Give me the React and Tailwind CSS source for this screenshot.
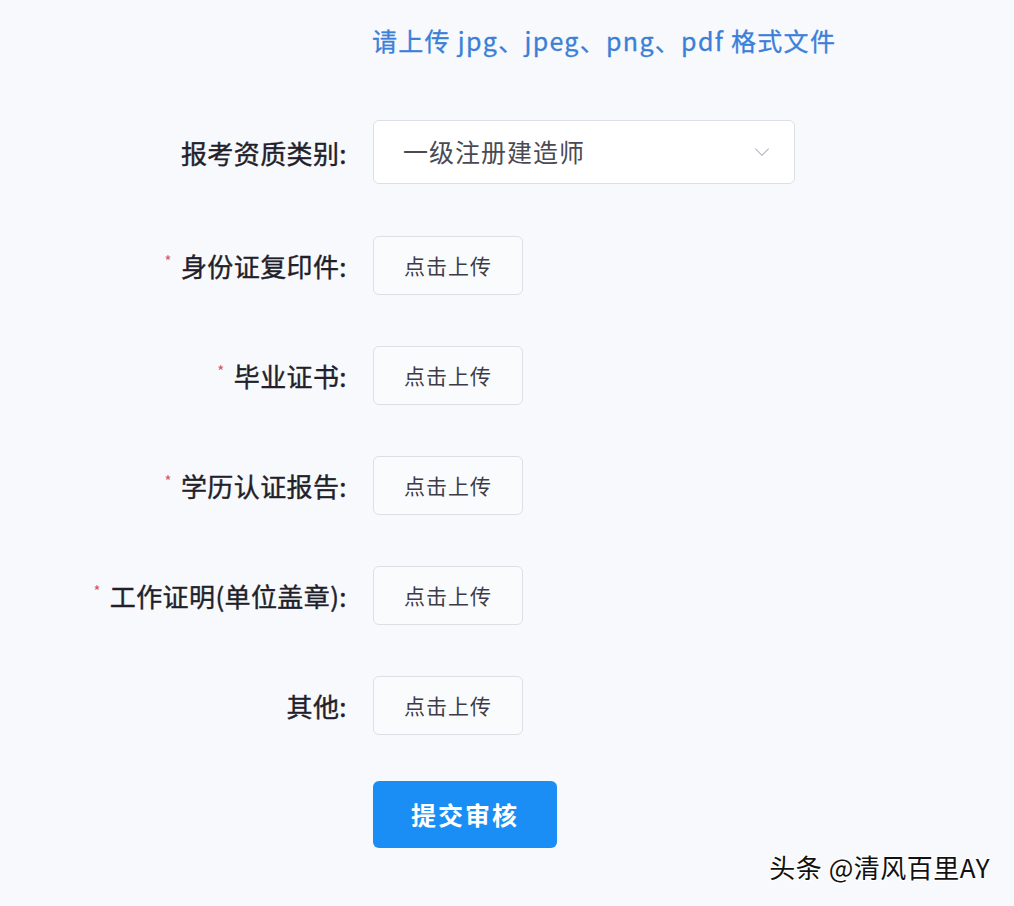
import { useState } from 'react'

const uploads = [
  { label: '身份证复印件', required: true },
  { label: '毕业证书', required: true },
  { label: '学历认证报告', required: true },
  { label: '工作证明(单位盖章)', required: true },
  { label: '其他', required: false },
]

const font = { fontFamily: '"Noto Sans CJK SC", "Noto Sans", sans-serif' }

export default function App() {
  const [category] = useState('一级注册建造师')

  return (
    <div className="relative w-[1014px] h-[906px] bg-[#f8f9fc] overflow-hidden" style={font}>
      {/* Tip */}
      <div className="pt-[22px] pl-[372px] h-[120px]">
        <p className="text-[25px] leading-[36px] text-[#3a80d8] tracking-[1.3px] [-webkit-text-stroke:0.3px_#3a80d8]">
          请上传 jpg、jpeg、png、pdf 格式文件
        </p>
      </div>

      {/* Category select */}
      <div className="flex items-center h-[64px]">
        <div className="w-[347px] text-right text-[26px] text-[#221f2b] tracking-[0.4px] [-webkit-text-stroke:0.4px_#221f2b]">报考资质类别:</div>
        <button className="ml-[26px] w-[422px] h-[64px] flex items-center justify-between pl-[29px] pr-[22px] bg-white border border-[#dcdfe6] rounded-[6px]">
          <span className="text-[25px] text-[#4a4a55] tracking-[1px]">{category}</span>
          <svg className="w-[20px] h-[20px] text-[#b8bcc6]" viewBox="0 0 24 24" fill="none" stroke="currentColor" strokeWidth={1.5}>
            <path d="M4 8l8 8 8-8" />
          </svg>
        </button>
      </div>

      {/* Upload rows */}
      <div className="mt-[52px] flex flex-col gap-[51px]">
        {uploads.map((u) => (
          <div key={u.label} className="flex items-center h-[59px]">
            <div className="w-[347px] flex justify-end items-center text-[26px] text-[#221f2b] tracking-[0.4px] [-webkit-text-stroke:0.4px_#221f2b]">
              {u.required && <span className="text-[#e2525c] text-[15px] mr-[9px] -mt-[8px] [-webkit-text-stroke:0px]">*</span>}
              <span>{u.label}:</span>
            </div>
            <button className="ml-[26px] w-[150px] h-[59px] bg-[#fafbfd] border border-[#dcdfe6] rounded-[6px] text-[21px] text-[#3d3b48] tracking-[1px]">
              点击上传
            </button>
          </div>
        ))}
      </div>

      {/* Submit */}
      <div className="mt-[46px] pl-[373px]">
        <button className="w-[184px] h-[67px] rounded-[6px] bg-[#1b8ef5] text-white text-[25px] font-bold tracking-[2px]">
          提交审核
        </button>
      </div>

      {/* Watermark */}
      <div
        className="absolute right-[24px] bottom-[20px] text-[26px] text-[#111] tracking-[0.5px]"
        style={{ textShadow: '1px 1px 0 #fff, -1px -1px 0 #fff, 1px -1px 0 #fff, -1px 1px 0 #fff' }}
      >
        头条 @清风百里AY
      </div>
    </div>
  )
}
